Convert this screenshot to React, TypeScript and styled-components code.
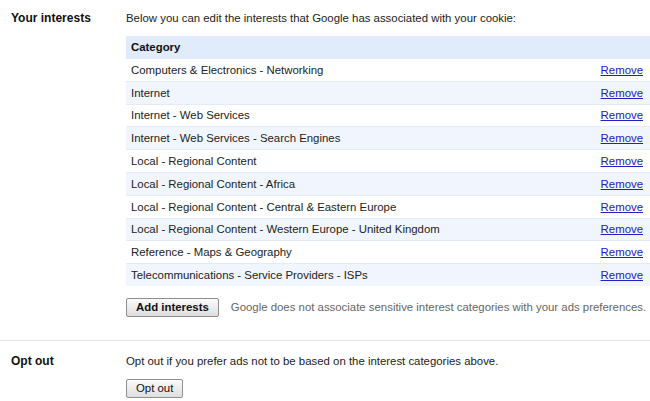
import React from "react";
import styled, { createGlobalStyle } from "styled-components";

const Global = createGlobalStyle`
  html, body { margin: 0; padding: 0; background: #fff; }
  body { font-family: Arial, "Liberation Sans", sans-serif; font-size: 11.4px; color: #222; }
`;

const Page = styled.div`
  width: 650px;
  overflow: hidden;
`;

const Section = styled.section<{ $top: number; $bottom: number; $divider?: boolean }>`
  display: grid;
  grid-template-columns: 126px 1fr;
  padding-top: ${(p) => p.$top}px;
  padding-bottom: ${(p) => p.$bottom}px;
  border-bottom: ${(p) => (p.$divider ? "1px solid #e3e3e3" : "none")};
`;

const Label = styled.h2`
  margin: 0;
  padding-left: 11px;
  font-size: 12px;
  font-weight: bold;
  line-height: 16px;
  color: #111;
`;

const Body = styled.div`
  display: flex;
  flex-direction: column;
  align-items: flex-start;
`;

const Intro = styled.p<{ $gap: number }>`
  margin: 0 0 ${(p) => p.$gap}px 0;
  line-height: 16px;
  color: #222;
`;

const Table = styled.div`
  width: 524px;
  display: flex;
  flex-direction: column;
`;

const HeaderRow = styled.div`
  height: 22px;
  background: #e0ebfc;
  display: flex;
  align-items: center;
  padding-left: 5px;
  font-weight: bold;
  color: #111;
`;

const Row = styled.div<{ $alt: boolean }>`
  box-sizing: border-box;
  height: 22.8px;
  border-top: 1px solid #e4ebf7;
  background: ${(p) => (p.$alt ? "#f1f6fe" : "#fff")};
  display: flex;
  align-items: center;
  justify-content: space-between;
  padding: 0 7px 0 5px;
`;

const RemoveLink = styled.a`
  color: #2020c0;
  text-decoration: underline;
  cursor: pointer;
`;

const Actions = styled.div`
  display: flex;
  align-items: center;
  gap: 12px;
  margin-top: 12px;
  white-space: nowrap;
`;

const Button = styled.button<{ $bold?: boolean }>`
  font-family: Arial, "Liberation Sans", sans-serif;
  font-size: 11.4px;
  font-weight: ${(p) => (p.$bold ? "bold" : "normal")};
  color: #111;
  height: 19px;
  padding: 0 9px;
  border: 1px solid #8f8f8f;
  border-radius: 2px;
  background: linear-gradient(#fbfbfb, #dedede);
  line-height: 15px;
`;

const Note = styled.span`
  color: #666;
`;

const rows = [
  "Computers & Electronics - Networking",
  "Internet",
  "Internet - Web Services",
  "Internet - Web Services - Search Engines",
  "Local - Regional Content",
  "Local - Regional Content - Africa",
  "Local - Regional Content - Central & Eastern Europe",
  "Local - Regional Content - Western Europe - United Kingdom",
  "Reference - Maps & Geography",
  "Telecommunications - Service Providers - ISPs",
];

export default function App() {
  return (
    <Page>
      <Global />
      <Section $top={10} $bottom={23} $divider>
        <Label>Your interests</Label>
        <Body>
          <Intro $gap={10}>Below you can edit the interests that Google has associated with your cookie:</Intro>
          <Table>
            <HeaderRow>Category</HeaderRow>
            {rows.map((r, i) => (
              <Row key={r} $alt={i % 2 === 1}>
                <span>{r}</span>
                <RemoveLink>Remove</RemoveLink>
              </Row>
            ))}
          </Table>
          <Actions>
            <Button $bold>Add interests</Button>
            <Note>Google does not associate sensitive interest categories with your ads preferences.</Note>
          </Actions>
        </Body>
      </Section>
      <Section $top={12} $bottom={4}>
        <Label>Opt out</Label>
        <Body>
          <Intro $gap={10}>Opt out if you prefer ads not to be based on the interest categories above.</Intro>
          <Button>Opt out</Button>
        </Body>
      </Section>
    </Page>
  );
}
